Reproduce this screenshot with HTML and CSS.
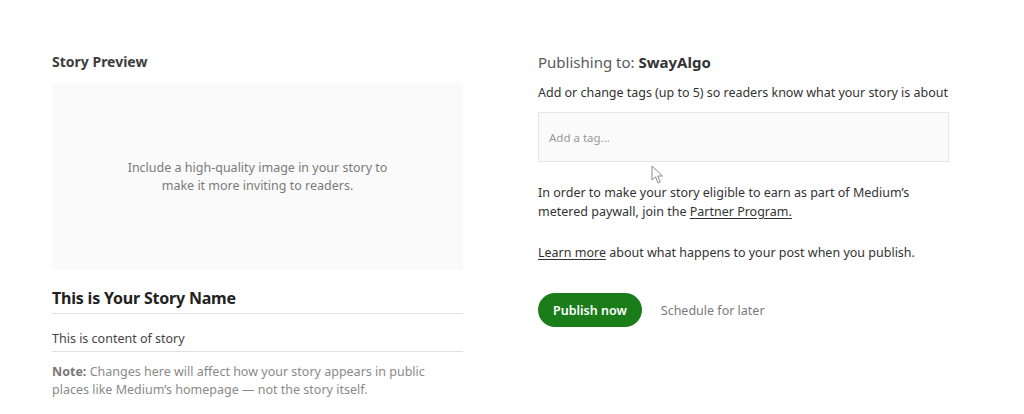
FILE: index.html
```html
<!DOCTYPE html>
<html lang="en">
<head>
<meta charset="utf-8">
<title>Publish story</title>
<link rel="stylesheet" href="styles.css">
</head>
<body>
<main class="page">
  <section class="col-left">
    <h2 class="preview-label">Story Preview</h2>
    <div class="image-box">
      <p>Include a high-quality image in your story to<br>make it more inviting to readers.</p>
    </div>
    <div class="story-title">This is Your Story Name</div>
    <div class="story-content">This is content of story</div>
    <p class="note"><strong>Note:</strong> Changes here will affect how your story appears in public places like Medium’s homepage — not the story itself.</p>
  </section>
  <section class="col-right">
    <div class="publishing">Publishing to: <strong>SwayAlgo</strong></div>
    <div class="tags-hint">Add or change tags (up to 5) so readers know what your story is about</div>
    <div class="tag-input-wrap">
      <div class="tag-input">Add a tag...</div>
      <svg class="cursor" width="14" height="20" viewBox="0 0 14 20"><path d="M1 1 L1 15 L4.5 11.8 L7 18 L9.3 17 L6.8 11 L11.5 11 Z" fill="#fff" stroke="#8a8a8a" stroke-width="1" stroke-linejoin="round"/></svg>
    </div>
    <p class="partner">In order to make your story eligible to earn as part of Medium’s metered paywall, join the <a href="#">Partner Program.</a></p>
    <p class="learn"><a href="#">Learn more</a> about what happens to your post when you publish.</p>
    <div class="actions">
      <button class="btn-publish">Publish now</button>
      <button class="btn-schedule">Schedule for later</button>
    </div>
  </section>
</main>
</body>
</html>
```
FILE: styles.css
```css
* { box-sizing: border-box; }
html, body { margin: 0; padding: 0; background: #fff; }
body {
  font-family: "Noto Sans", "Open Sans", sans-serif;
  color: #333;
  font-size: 13px;
}
.page {
  display: flex;
  gap: 75px;
  padding: 52px 0 0 52px;
}
.col-left { width: 411px; flex: none; }
.col-right { width: 411px; flex: none; }

.preview-label {
  margin: 0;
  font-size: 14px;
  line-height: 20px;
  font-weight: 700;
  color: #3d3d3d;
}
.image-box {
  margin-top: 11px;
  height: 187px;
  background: #fafafa;
  display: flex;
  align-items: center;
  justify-content: center;
}
.image-box p {
  margin: 0;
  text-align: center;
  color: #7a7a7a;
  font-size: 12.5px;
  line-height: 18px;
}
.story-title {
  margin-top: 16px;
  font-size: 16px;
  line-height: 24px;
  font-weight: 700;
  color: #222;
  padding-bottom: 3px;
  border-bottom: 1px solid #e0e0e0;
  letter-spacing: -0.2px;
}
.story-content {
  margin-top: 15px;
  font-size: 12.5px;
  line-height: 20px;
  color: #444;
  padding-bottom: 2px;
  border-bottom: 1px solid #e0e0e0;
}
.note {
  margin: 11px 0 0;
  font-size: 12.5px;
  line-height: 18px;
  color: #8a8a8a;
  width: 380px;
}
.note strong { color: #777; }

.publishing {
  font-size: 15px;
  line-height: 20px;
  color: #5a5a5a;
}
.publishing strong { color: #333; }
.tags-hint {
  margin-top: 11px;
  font-size: 12.5px;
  line-height: 20px;
  color: #333;
  white-space: nowrap;
  letter-spacing: -0.02px;
}
.tag-input-wrap { position: relative; margin-top: 9px; width: 411px; }
.tag-input {
  height: 50px;
  background: #fafafa;
  border: 1px solid #e6e6e6;
  padding: 0 10px;
  display: flex;
  align-items: center;
  font-size: 11.5px;
  color: #999;
}
.cursor { position: absolute; left: 113px; top: 53px; }
.partner {
  margin: 21px 0 0;
  font-size: 12.5px;
  line-height: 19px;
  color: #333;
  width: 400px;
}
.partner a, .learn a { color: #333; text-decoration: underline; text-underline-offset: 2px; }
.learn {
  margin: 22px 0 0;
  font-size: 12.5px;
  line-height: 19px;
  color: #333;
}
.actions {
  margin-top: 31px;
  display: flex;
  align-items: center;
  gap: 19px;
}
.btn-publish {
  height: 34px;
  padding: 0 15px;
  border: none;
  border-radius: 17px;
  background: #1a7d1a;
  color: #fff;
  font-family: inherit;
  font-size: 12.5px;
  font-weight: 600;
}
.btn-schedule {
  background: none;
  border: none;
  padding: 0;
  font-family: inherit;
  font-size: 12.5px;
  color: #7a7a7a;
}
```
